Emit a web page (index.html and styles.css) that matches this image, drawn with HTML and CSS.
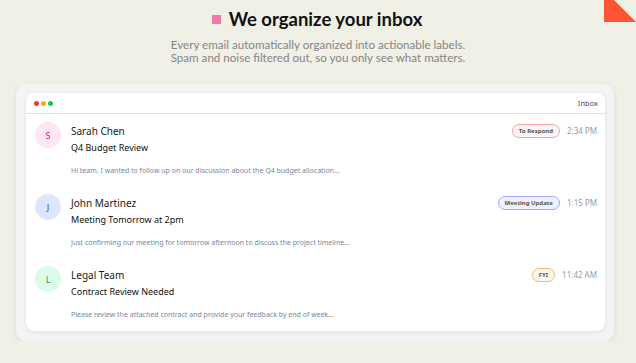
FILE: index.html
```html
<!DOCTYPE html>
<html lang="en">
<head>
    <meta charset="UTF-8">
    <meta name="viewport" content="width=device-width, initial-scale=1.0">
    <title>Inbox</title>
    <link rel="stylesheet" href="styles.css">
</head>
<body>
    <div class="corner">
        <svg width="32" height="22" viewBox="0 0 32 22">
            <polygon points="0,0 10,0 32,22 0,22" fill="#ff5433"/>
        </svg>
    </div>
    <section class="hero">
        <h1><span class="mark"></span>We organize your inbox</h1>
        <p>Every email automatically organized into actionable labels.<br>Spam and noise filtered out, so you only see what matters.</p>
    </section>
    <section class="window-wrap">
        <div class="window">
            <div class="window-bar">
                <div class="dots">
                    <span class="dot red"></span>
                    <span class="dot yellow"></span>
                    <span class="dot green"></span>
                </div>
                <span class="bar-title">Inbox</span>
            </div>

            <div class="mail">
                <div class="avatar pink">S</div>
                <div class="mail-body">
                    <div class="mail-name">Sarah Chen</div>
                    <div class="mail-subject">Q4 Budget Review</div>
                    <div class="mail-preview">Hi team, I wanted to follow up on our discussion about the Q4 budget allocation...</div>
                </div>
                <div class="mail-meta">
                    <span class="badge respond">To Respond</span>
                    <span class="time">2:34 PM</span>
                </div>
            </div>

            <div class="mail">
                <div class="avatar blue">J</div>
                <div class="mail-body">
                    <div class="mail-name">John Martinez</div>
                    <div class="mail-subject">Meeting Tomorrow at 2pm</div>
                    <div class="mail-preview">Just confirming our meeting for tomorrow afternoon to discuss the project timeline...</div>
                </div>
                <div class="mail-meta">
                    <span class="badge meeting">Meeting Update</span>
                    <span class="time">1:15 PM</span>
                </div>
            </div>

            <div class="mail">
                <div class="avatar green">L</div>
                <div class="mail-body">
                    <div class="mail-name">Legal Team</div>
                    <div class="mail-subject">Contract Review Needed</div>
                    <div class="mail-preview">Please review the attached contract and provide your feedback by end of week...</div>
                </div>
                <div class="mail-meta">
                    <span class="badge fyi">FYI</span>
                    <span class="time">11:42 AM</span>
                </div>
            </div>
        </div>
    </section>
</body>
</html>
```

FILE: styles.css
```css
*,::after,::before{
    padding: 0;
    margin: 0;
    box-sizing: border-box;
}

body{
    font-family: 'Noto Sans', sans-serif;
    background-color: #f0f0e7;
    color: #1a1a1a;
    position: relative;
}

.corner{
    position: absolute;
    top: 0;
    right: 0;
    line-height: 0;
}

.hero{
    text-align: center;
    padding-top: 7px;
}

.hero h1{
    display: flex;
    justify-content: center;
    align-items: center;
    gap: 8px;
    font-family: 'Lato', sans-serif;
    font-size: 18.5px;
    font-weight: 700;
    color: #111;
    line-height: 24px;
    padding-right: 2px;
}

.mark{
    width: 9px;
    height: 9px;
    background-color: #ef7aa8;
}

.hero p{
    margin-top: 7px;
    font-family: 'Lato', sans-serif;
    font-size: 11.6px;
    line-height: 13px;
    color: #858585;
}

.window-wrap{
    margin: 20px 22px 0 16px;
    padding: 9px 9px 10px 10px;
    background-color: #f4f4f5;
    border-radius: 10px;
    box-shadow: 0 2px 6px rgba(0, 0, 0, 0.08);
}

.window{
    background-color: #fff;
    border-radius: 8px;
    box-shadow: 0 1px 4px rgba(0, 0, 0, 0.08);
    padding-bottom: 1px;
}

.window-bar{
    display: flex;
    justify-content: space-between;
    align-items: center;
    height: 21px;
    padding: 0 7px 0 8px;
    border-bottom: 1px solid #e4e4e7;
}

.dots{
    display: flex;
    gap: 2px;
}

.dot{
    width: 5px;
    height: 5px;
    border-radius: 50%;
}
.dot.red{ background-color: #f0353a; }
.dot.yellow{ background-color: #f2ac0a; }
.dot.green{ background-color: #1fc14f; }

.bar-title{
    font-size: 7.5px;
    color: #5a3e6e;
}

.mail{
    display: flex;
    height: 72px;
    padding: 8px 8px 0 9px;
}

.avatar{
    flex: none;
    width: 26px;
    height: 26px;
    border-radius: 50%;
    display: flex;
    justify-content: center;
    align-items: center;
    font-size: 9px;
}
.avatar.pink{ background-color: #fce7f3; color: #d0246f; }
.avatar.blue{ background-color: #e0e5ff; color: #3b3fd9; }
.avatar.green{ background-color: #dcfce7; color: #189a6a; }

.mail-body{
    flex: 1;
    margin-left: 10px;
}

.mail-name{
    font-size: 10px;
    line-height: 16px;
    margin-top: 1px;
    color: #1a1a1a;
}

.mail-subject{
    font-size: 9px;
    line-height: 15px;
    margin-top: 1px;
    color: #111;
}

.mail-preview{
    font-size: 7px;
    line-height: 10px;
    margin-top: 11px;
    color: #7a85a0;
}

.mail-meta{
    display: flex;
    align-items: center;
    gap: 7px;
    height: 15px;
    margin-top: 1px;
}

.badge{
    font-size: 6px;
    font-weight: 700;
    color: #555;
    padding: 2px 6px;
    border-radius: 8px;
    border: 1px solid;
}
.badge.respond{ border-color: #f5a3a3; background-color: #fff3f3; }
.badge.meeting{ border-color: #a3a7f5; background-color: #eff0ff; }
.badge.fyi{ border-color: #f9b56b; background-color: #fff8ef; }

.time{
    font-size: 8px;
    color: #8f9cae;
}
```
